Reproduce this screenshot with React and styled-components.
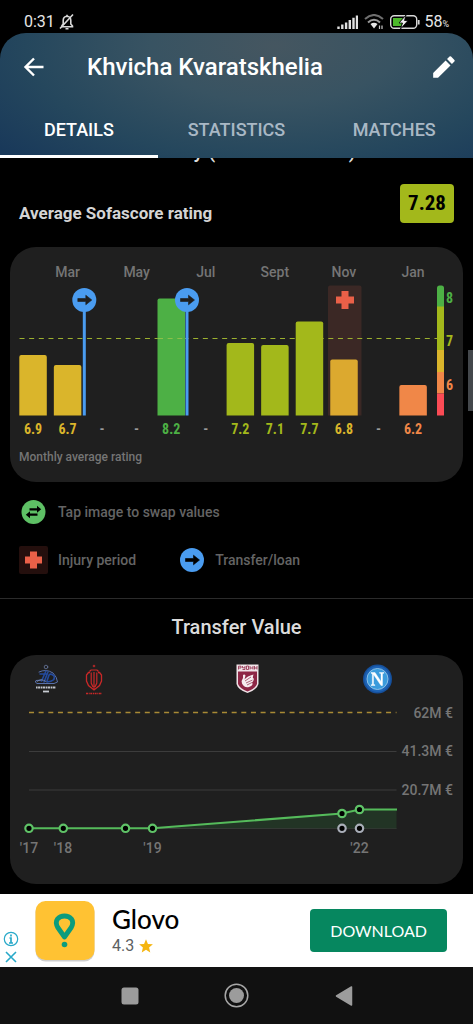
import { useState } from 'react';
import styled, { createGlobalStyle } from 'styled-components';

const GlobalStyle = createGlobalStyle`
  * {
    box-sizing: border-box;
  }

  body {
    margin: 0;
    background: #000;
    font-family: Roboto, 'Liberation Sans', sans-serif;
    color: #dcdcdc;
  }

  button {
    font-family: inherit;
    background: transparent;
    border: 0;
    padding: 0;
    cursor: pointer;
  }

  svg {
    display: block;
  }
`;

const Page = styled.div`
  min-height: 100vh;
  display: flex;
  flex-direction: column;
`;

const StatusBar = styled.div`
  height: 33px;
  padding: 10px 24px 0;
  display: flex;
  align-items: center;
  justify-content: space-between;
  color: #e6e6e6;
  font-size: 16px;
  line-height: 24px;
`;

const StatusGroup = styled.div`
  display: flex;
  align-items: center;
  gap: ${({ $gap }) => $gap}px;
`;

const Percent = styled.small`
  font-size: 9px;
  line-height: 1;
`;

const Header = styled.header`
  border-radius: 26px 26px 0 0;
  background: radial-gradient(
    ellipse 75% 130% at 58% 10%,
    #455660 0%,
    #385362 35%,
    #25475d 70%,
    #19395a 100%
  );
`;

const TitleRow = styled.div`
  height: 68px;
  padding: 0 16px 0 22px;
  display: flex;
  align-items: center;
`;

const Title = styled.h1`
  flex: 1;
  margin: 0 0 0 41px;
  font-size: 24px;
  line-height: 28px;
  font-weight: 500;
  color: #fff;
`;

const Tabs = styled.nav`
  display: flex;
`;

const Tab = styled.button`
  flex: 1;
  height: 57px;
  padding-top: 2px;
  border-bottom: 3px solid ${({ $active }) => ($active ? '#fff' : 'transparent')};
  font-size: 18px;
  font-weight: 500;
  color: ${({ $active }) => ($active ? '#fff' : '#a9b8c5')};
`;

const Content = styled.main`
  position: relative;
  flex: 1;
  overflow: hidden;
  padding-bottom: 10px;
`;

const ScrollThumb = styled.div`
  position: absolute;
  top: 192px;
  right: 0;
  width: 5px;
  height: 61px;
  background: #43474b;
`;

const ScrolledPast = styled.div`
  height: 5px;
  overflow: hidden;
  display: flex;
  align-items: flex-end;
  justify-content: center;
`;

const SectionTitle = styled.h2`
  margin: 0;
  text-align: center;
  font-size: 20px;
  line-height: 24px;
  font-weight: 500;
  color: #dcdcdc;
`;

const RatingRow = styled.div`
  display: flex;
  align-items: flex-end;
  justify-content: space-between;
  padding: 21px 19px 24px;
`;

const RatingTitle = styled.h2`
  margin: 0;
  font-size: 17px;
  line-height: 20px;
  font-weight: 700;
  color: #d4d4d4;
`;

const RatingBadge = styled.span`
  padding: 0 8px;
  border-radius: 4px;
  background: #a3b81b;
  color: #000;
  font-family: 'Roboto Condensed', Roboto, sans-serif;
  font-size: 21px;
  line-height: 39px;
  font-weight: 700;
`;

const Card = styled.section`
  margin: 0 10px;
  border-radius: 26px;
  background: #1f1f1f;
`;

const Chart = styled.svg`
  width: 100%;
  height: auto;
  font-size: 14px;
  font-weight: 500;
  fill: #757575;

  .value {
    font-family: 'Roboto Condensed', Roboto, sans-serif;
    font-size: 14px;
    font-weight: 700;
  }

  .caption {
    font-size: 12px;
  }
`;

const Legend = styled.div`
  padding: 16px 19px 24px;
  display: flex;
  flex-direction: column;
  gap: 20px;
  border-bottom: 1px solid #2b2b2b;
`;

const LegendRow = styled.div`
  display: flex;
  gap: 43px;
`;

const LegendItem = styled.div`
  display: flex;
  align-items: center;
  gap: 10px;
  font-size: 14px;
  line-height: 28px;
  font-weight: 500;
  color: #646464;
`;

const TransferHeading = styled.div`
  padding: 16px 0;
`;

const Ad = styled.aside`
  height: 73px;
  padding-right: 26px;
  background: #fff;
  display: flex;
  align-items: center;
`;

const AdChoices = styled.div`
  align-self: flex-end;
  width: 35px;
  padding: 0 0 3px 3px;
  display: flex;
  flex-direction: column;
  gap: 3px;
`;

const AdText = styled.div`
  flex: 1;
  padding-left: 17px;
  font-family: Lato, sans-serif;
`;

const AdName = styled.div`
  font-size: 26px;
  line-height: 30px;
  font-weight: 500;
  color: #000;
`;

const AdRating = styled.div`
  display: flex;
  align-items: center;
  gap: 5px;
  font-family: Roboto, sans-serif;
  font-size: 16px;
  line-height: 24px;
  color: #5c5f62;
`;

const DownloadButton = styled.button`
  && {
    padding: 0 20px;
    height: 43px;
    border-radius: 4px;
    background: #06875f;
    color: #fff;
    font-family: Lato, sans-serif;
    font-size: 16px;
  }
`;

const SystemNav = styled.nav`
  height: 57px;
  background: #111;
  display: flex;
  align-items: center;
  justify-content: center;
  gap: 59px;
`;

const SystemButton = styled.button`
  width: 48px;
  height: 48px;
  display: flex;
  align-items: center;
  justify-content: center;
`;

const YELLOW = '#dab52b';
const LIME = '#a3b81b';
const GREEN = '#4db045';
const ORANGE = '#f08748';

const months = [
  { value: '6.9', top: 108, color: YELLOW },
  { value: '6.7', top: 118, color: YELLOW, label: 'Mar' },
  { value: '-' },
  { value: '-', label: 'May' },
  { value: '8.2', top: 51.5, color: GREEN },
  { value: '-', label: 'Jul' },
  { value: '7.2', top: 96, color: LIME },
  { value: '7.1', top: 98, color: LIME, label: 'Sept' },
  { value: '7.7', top: 74.5, color: LIME },
  { value: '6.8', top: 112.5, color: '#dca92f', text: YELLOW, label: 'Nov' },
  { value: '-' },
  { value: '6.2', top: 138, color: ORANGE, label: 'Jan' },
];

const BASE = 168.5;
const monthX = (i) => 23 + i * 34.55;

const TransferMark = ({ x, y, arrow = '#1f1f1f' }) => (
  <g transform={`translate(${x} ${y})`}>
    <circle r="12" fill="#4a9cf0" />
    <path
      d="M-6.5 -1.5H1.5V-4.8L7.5 0L1.5 4.8V1.5H-6.5Z"
      fill={arrow}
      stroke={arrow}
      strokeWidth="0.6"
      strokeLinejoin="round"
    />
  </g>
);

const Cross = ({ x, y, size = 9 }) => (
  <path
    transform={`translate(${x} ${y})`}
    d={`M-3.5 -${size}H3.5V-3.5H${size}V3.5H3.5V${size}H-3.5V3.5H-${size}V-3.5H-3.5Z`}
    fill="#ea6048"
  />
);

const barPath = (x, top) =>
  `M${x} ${BASE}V${top + 2}Q${x} ${top} ${x + 2} ${top}H${x + 25.5}Q${x + 27.5} ${top} ${x + 27.5} ${top + 2}V${BASE}Z`;

const RatingChart = () => (
  <Chart viewBox="0 0 453 235" role="img" aria-label="Monthly average rating">
    <path d="M318 168.5V40.5Q318 38.5 320 38.5H349.5Q351.5 38.5 351.5 40.5V168.5Z" fill="#3b2825" />
    <path d="M9.5 91.5H427" stroke="#9cb12f" strokeWidth="1.2" strokeDasharray="5 4.65" />
    {months.map(
      (m, i) =>
        m.top && <path key={i} d={barPath(monthX(i) - 13.7, m.top)} fill={m.color} />
    )}
    <path d="M148 91.5H175" stroke="#8cc04a" strokeWidth="1" strokeDasharray="5 4.65" />
    {[74.3, 177].map((x) => (
      <g key={x}>
        <path d={`M${x} 53V${BASE}`} stroke="#4a9cf0" strokeWidth="3" />
        <TransferMark x={x} y={53} />
      </g>
    ))}
    <Cross x={335} y={53} />
    <path d="M427 60V41Q427 38.5 429.5 38.5H431.5Q434 38.5 434 41V60Z" fill={GREEN} />
    <path d="M427 59.5H434V103H427Z" fill={LIME} />
    <path d="M427 103H434V125H427Z" fill={YELLOW} />
    <path d="M427 125H434V146.5H427Z" fill={ORANGE} />
    <path d="M427 146.5H434V168.5H427Z" fill="#fb4b55" />
    {months.map((m, i) => (
      <g key={i} textAnchor="middle">
        {m.label && (
          <text x={monthX(i)} y="30">
            {m.label}
          </text>
        )}
        <text className="value" x={monthX(i)} y="187" fill={m.text || m.color || '#9a9a9a'}>
          {m.value}
        </text>
      </g>
    ))}
    <text className="value" x="436" y="56" fill={GREEN}>8</text>
    <text className="value" x="436" y="99" fill={LIME}>7</text>
    <text className="value" x="436" y="143" fill={ORANGE}>6</text>
    <text className="caption" x="9" y="214">Monthly average rating</text>
  </Chart>
);

const DinamoCrest = () => (
  <g transform="translate(24 8)" fill="none" strokeLinecap="round">
    <circle cx="12" cy="4" r="1.8" stroke="#6878a0" strokeWidth="0.8" />
    <path d="M5 9Q12 5.5 19 10Q23 14 23.5 19L20 20.5H3Q0 19 2 17.5L8 17" stroke="#5870aa" strokeWidth="1" />
    <path d="M12 8L7.5 18M14 9L10 19M6 11L13 11M13 19Q22 18 20 13Q17 10 15 12L13 18" stroke="#234a9e" strokeWidth="1.6" />
    <path d="M3 18.5Q7 15 12 18.5" stroke="#8496bd" strokeWidth="0.7" />
    <path d="M2 24.5H22" stroke="#bfc4cc" strokeWidth="2.2" strokeDasharray="1.6 0.5 2.2 0.6" strokeLinecap="butt" />
    <path d="M9 28.5H15" stroke="#c8ccd2" strokeWidth="1.8" strokeLinecap="butt" />
  </g>
);

const RustaviCrest = () => (
  <g transform="translate(75 8)" fill="none" stroke="#c92828">
    <circle cx="9" cy="3" r="1.3" fill="#a22626" stroke="none" />
    <path d="M4.5 8.5L6 7H12L13.5 8.5" strokeWidth="1.2" />
    <path d="M5 9.5H3.5L1.5 12V18L3.5 22.5L9 27L14.5 22.5L16.5 18V12L14.5 9.5H13" strokeWidth="1.3" />
    <path d="M6.2 9.500V20L8 24M11.800 9.500V20L10 24M9 9V26" strokeWidth="1.2" />
    <path d="M1 30.5H17" strokeWidth="1.5" strokeDasharray="2 0.7 1 0.6" />
  </g>
);

const RubinCrest = () => (
  <g transform="translate(226 9)">
    <path d="M0.5 0.5H22.5V20Q21 26 11.5 29Q2 26 0.5 20Z" fill="#f0e4e8" />
    <path d="M2 7.5H21V20Q19 25 11.5 27.5Q4 25 2 20Z" fill="#8e2746" />
    <path d="M2.5 5.5V2.2H5V4H2.5M6.5 2V3.8H9M9 2V5.5H6.5M10.5 5.5V2H12.5V5.5H10.5M14 2V5.5M17 2V5.5M14 4H17M18.5 2V5.5M21 2V5.5M18.5 4H21" fill="none" stroke="#8e2746" strokeWidth="0.8" />
    <path d="M7 11Q8.5 10 9.5 11.5L8.5 15.5Q11 12 17.5 10.5Q16 15 18 14.5Q17.5 17.5 16 18.5Q18 21 13 23Q8 24 6 19.5Q5 16.5 7 14Z" fill="#f6edf0" />
    <path d="M9 17L15 13M10 19L16.5 16M11 21L16 18.5" stroke="#8e2746" strokeWidth="0.7" />
  </g>
);

const NapoliCrest = () => (
  <g transform="translate(367.5 24)">
    <circle r="14.5" fill="#16509c" />
    <circle r="13" fill="#1d63b5" />
    <circle r="10.5" fill="#3a9bdc" stroke="#a5d0ee" strokeWidth="0.8" />
    <path
      d="M-6.5 -6.5H-2.5L3.5 2.5V-5.5L2 -5.8V-6.5H6.5V-5.8L5 -5.5V6.5H3.5L-4 -4.5V5.5L-2.5 5.8V6.5H-6.5V5.8L-5.2 5.5V-5.2L-6.5 -5.8Z"
      fill="#fff"
      stroke="#fff"
      strokeWidth="0.4"
    />
  </g>
);

const points = [
  [19, 173.3],
  [53.3, 173.3],
  [115.5, 173.3],
  [142.5, 173.3],
  [332, 158.5],
  [349.5, 154.5],
];

const years = [
  ["'17", 19],
  ["'18", 53],
  ["'19", 142.5],
  ["'22", 349.5],
];

const TransferChart = () => (
  <Chart viewBox="0 0 453 229" role="img" aria-label="Transfer value">
    <DinamoCrest />
    <RustaviCrest />
    <RubinCrest />
    <NapoliCrest />
    <path d="M19 57.5H386.5" stroke="#a98a35" strokeWidth="1.5" strokeDasharray="5 4.65" />
    <path d="M19 96.5H386.5M19 135H386.5M19 173.5H386.5" stroke="#3c3c3c" strokeWidth="1" />
    <path d="M142.5 173L332 158.5L349.5 154.5H386.5V173.5Z" fill="#223425" />
    <path
      d="M19 173.3H142.5L332 158.5L349.5 154.5H387"
      fill="none"
      stroke="#55bb5b"
      strokeWidth="2"
    />
    {points.map(([x, y]) => (
      <circle key={x} cx={x} cy={y} r="3.7" fill="#000" stroke="#5fc267" strokeWidth="2.2" />
    ))}
    {[332, 349.5].map((x) => (
      <circle key={x} cx={x} cy="173.3" r="3.7" fill="#000" stroke="#a9aeb8" strokeWidth="2.2" />
    ))}
    <g textAnchor="end">
      <text x="443" y="63">62M €</text>
      <text x="443" y="101">41.3M €</text>
      <text x="443" y="140">20.7M €</text>
    </g>
    <g textAnchor="middle">
      {years.map(([label, x]) => (
        <text key={label} x={x} y="198">
          {label}
        </text>
      ))}
    </g>
  </Chart>
);

const BellOff = () => (
  <svg width="16" height="18" viewBox="0 0 16 18" fill="none" stroke="#d8d8d8" strokeWidth="1.6">
    <path d="M3 13.5V12.5L4.2 11V7.5Q4.2 3.5 8 3.2Q11.8 3.5 11.8 7.5V11L13.5 13V13.7H2.5" />
    <path d="M6.5 15.8H9.5M8 3.5V1.8M1 15.5L14 1.5" />
  </svg>
);

const SignalIcon = () => (
  <svg width="21" height="14" viewBox="0 0 21 14" stroke="#e0e0e0" strokeWidth="2.4">
    <path d="M1.5 14V11.5M5.3 14V9.5M9.1 14V7.5M12.8 14V5M16.5 14V2.8M20 14V0.5" />
  </svg>
);

const WifiIcon = () => (
  <svg width="20" height="16" viewBox="0 0 20 16" fill="none" strokeWidth="2">
    <path d="M1 5Q10 -3 19 5" stroke="#6f6f6f" />
    <path d="M4 8.5Q10 3 16 8.5" stroke="#9a9a9a" />
    <path d="M6.5 10Q10 7.5 13.5 10L10 14.5Z" fill="#e6e6e6" stroke="none" />
    <path d="M15.5 15V11.5M18 11.5V15" stroke="#c8c8c8" strokeWidth="1.2" />
  </svg>
);

const BatteryIcon = () => (
  <svg width="30" height="14" viewBox="0 0 30 14">
    <rect x="0.7" y="0.7" width="26" height="12.6" rx="3.5" fill="none" stroke="#d8d8d8" strokeWidth="1.4" />
    <path d="M28.7 5V9.5" stroke="#d8d8d8" strokeWidth="1.8" />
    <path d="M3 3H13L9 8H12L11 11H3Z" fill="#4bb82a" />
    <path d="M16 0L9 8H12.5L10.5 14L18 5.5H14.5Z" fill="#eee" stroke="#000" strokeWidth="0.8" />
  </svg>
);

const BackIcon = () => (
  <svg width="24" height="24" viewBox="0 0 24 24" fill="none" stroke="#fff" strokeWidth="2.4">
    <path d="M21.5 12H4M12 3.5L3.5 12L12 20.5" />
  </svg>
);

const EditIcon = () => (
  <svg width="26" height="26" viewBox="0 0 24 24" fill="#fff">
    <path d="M2 17.5V22H6.5L18 10.5L13.5 6ZM21.6 6.9Q22.3 6.2 21.6 5.5L18.5 2.4Q17.8 1.7 17.1 2.4L14.8 4.7L19.3 9.2Z" />
  </svg>
);

const SwapIcon = () => (
  <svg width="29" height="28" viewBox="0 0 29 28">
    <circle cx="14.5" cy="14" r="12" fill="#5ec065" />
    <path
      d="M10.5 10.2H18V7.8L22.2 11.3L18 14.8V12.4H10.5ZM18.5 17.8H11V20.2L6.8 16.7L11 13.2V15.6H18.5Z"
      fill="#000"
    />
  </svg>
);

const InjuryIcon = () => (
  <svg width="29" height="28" viewBox="0 0 29 28">
    <rect width="29" height="28" rx="2" fill="#240f0d" />
    <Cross x={14.5} y={14} size={8.5} />
  </svg>
);

const TransferIcon = () => (
  <svg width="26" height="28" viewBox="0 0 26 28">
    <TransferMark x={13} y={14} arrow="#000" />
  </svg>
);

const GlovoIcon = () => (
  <svg width="60" height="62" viewBox="0 0 60 62">
    <rect x="0.5" y="2.5" width="59" height="59" rx="10" fill="#cfcfcf" />
    <rect x="0.5" y="1" width="59" height="59" rx="10" fill="#ffc233" />
    <path
      d="M29.5 37L22.8 27.5Q20 22.5 22.5 19Q25 16 29.5 16Q34 16 36.5 19Q39 22.5 36.2 27.5Z"
      fill="none"
      stroke="#0b9c7d"
      strokeWidth="4.8"
      strokeLinejoin="round"
    />
    <circle cx="29.5" cy="44.5" r="2.8" fill="#0b9c7d" />
  </svg>
);

const AdInfoIcon = () => (
  <svg width="16" height="16" viewBox="0 0 16 16" fill="none" stroke="#28a9c9">
    <circle cx="8" cy="8" r="6.7" strokeWidth="1.2" />
    <path d="M8 3.5V5.5M6.5 7H8V12M6 12H10" strokeWidth="1.7" />
  </svg>
);

const AdCloseIcon = () => (
  <svg width="16" height="14" viewBox="0 0 16 14" stroke="#28a9c9" strokeWidth="1.6">
    <path d="M3 2L13 12M13 2L3 12" />
  </svg>
);

const StarIcon = () => (
  <svg width="14" height="14" viewBox="0 0 24 24" fill="#f5b50f">
    <path d="M12 0.5L15.3 8.5L23.8 9.2L17.3 14.7L19.3 23.2L12 18.6L4.7 23.2L6.7 14.7L0.2 9.2L8.7 8.5Z" />
  </svg>
);

const tabs = ['DETAILS', 'STATISTICS', 'MATCHES'];

const App = () => {
  const [currentTab, setCurrentTab] = useState('DETAILS');

  return (
    <Page>
      <GlobalStyle />
      <StatusBar>
        <StatusGroup $gap={4}>
          0:31
          <BellOff />
        </StatusGroup>
        <StatusGroup $gap={6}>
          <SignalIcon />
          <WifiIcon />
          <StatusGroup $gap={4}>
            <BatteryIcon />
            <span>
              58<Percent>%</Percent>
            </span>
          </StatusGroup>
        </StatusGroup>
      </StatusBar>
      <Header>
        <TitleRow>
          <button type="button" aria-label="Back">
            <BackIcon />
          </button>
          <Title>Khvicha Kvaratskhelia</Title>
          <button type="button" aria-label="Edit">
            <EditIcon />
          </button>
        </TitleRow>
        <Tabs>
          {tabs.map((tab) => (
            <Tab
              key={tab}
              type="button"
              $active={tab === currentTab}
              onClick={() => setCurrentTab(tab)}
            >
              {tab}
            </Tab>
          ))}
        </Tabs>
      </Header>
      <Content>
        <ScrollThumb />
        <ScrolledPast>
          <SectionTitle>Summary (last 12 months)</SectionTitle>
        </ScrolledPast>
        <RatingRow>
          <RatingTitle>Average Sofascore rating</RatingTitle>
          <RatingBadge>7.28</RatingBadge>
        </RatingRow>
        <Card>
          <RatingChart />
        </Card>
        <Legend>
          <LegendItem>
            <SwapIcon />
            Tap image to swap values
          </LegendItem>
          <LegendRow>
            <LegendItem>
              <InjuryIcon />
              Injury period
            </LegendItem>
            <LegendItem>
              <TransferIcon />
              Transfer/loan
            </LegendItem>
          </LegendRow>
        </Legend>
        <TransferHeading>
          <SectionTitle>Transfer Value</SectionTitle>
        </TransferHeading>
        <Card>
          <TransferChart />
        </Card>
      </Content>
      <Ad>
        <AdChoices>
          <button type="button" aria-label="About this ad">
            <AdInfoIcon />
          </button>
          <button type="button" aria-label="Close ad">
            <AdCloseIcon />
          </button>
        </AdChoices>
        <GlovoIcon />
        <AdText>
          <AdName>Glovo</AdName>
          <AdRating>
            4.3
            <StarIcon />
          </AdRating>
        </AdText>
        <DownloadButton type="button">DOWNLOAD</DownloadButton>
      </Ad>
      <SystemNav>
        <SystemButton type="button" aria-label="Recent apps">
          <svg width="18" height="18" viewBox="0 0 18 18">
            <rect x="0.5" y="0.5" width="17" height="17" rx="2.5" fill="#9c9c9c" />
          </svg>
        </SystemButton>
        <SystemButton type="button" aria-label="Home">
          <svg width="25" height="25" viewBox="0 0 25 25">
            <circle cx="12.5" cy="12.5" r="11.3" fill="none" stroke="#a8a8a8" strokeWidth="1.5" />
            <circle cx="12.5" cy="12.5" r="7.5" fill="#9c9c9c" />
          </svg>
        </SystemButton>
        <SystemButton type="button" aria-label="Back to previous screen">
          <svg width="18" height="20" viewBox="0 0 18 20">
            <path d="M1.5 10L16.5 1V19Z" fill="#9c9c9c" stroke="#9c9c9c" strokeWidth="1.5" strokeLinejoin="round" />
          </svg>
        </SystemButton>
      </SystemNav>
    </Page>
  );
};

export default App;
